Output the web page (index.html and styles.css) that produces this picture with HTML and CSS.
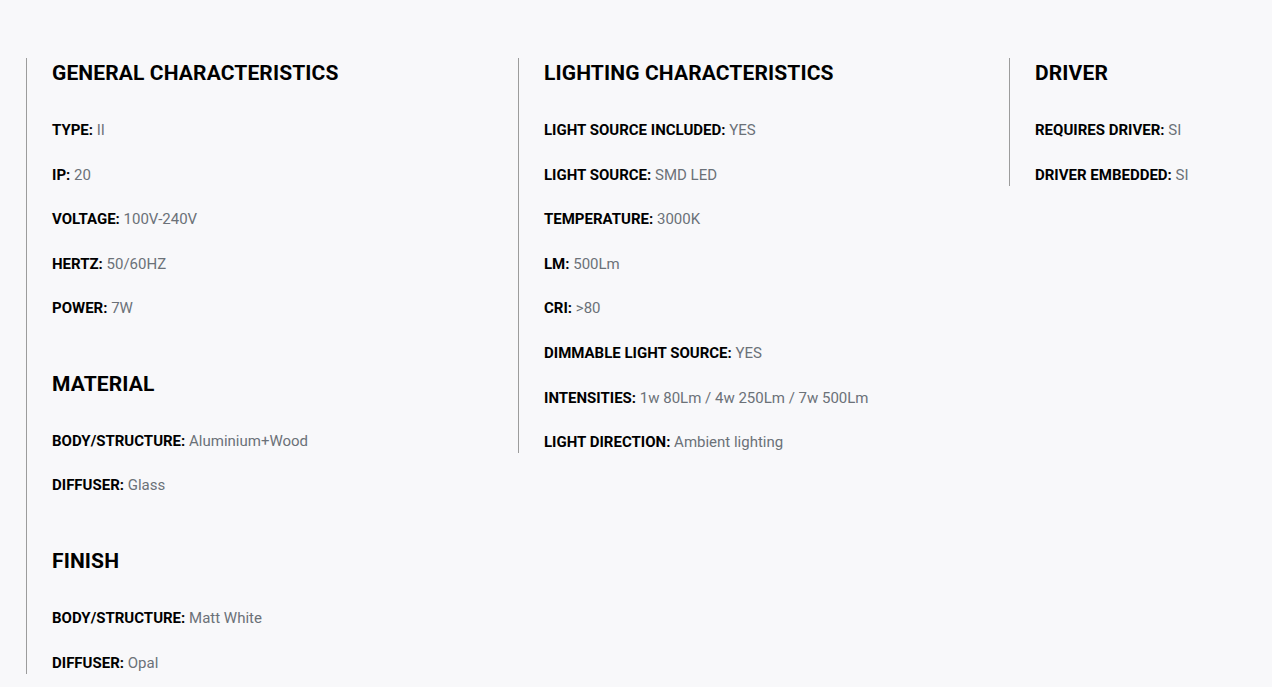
FILE: index.html
```html
<!DOCTYPE html>
<html lang="en">
<head>
<meta charset="utf-8">
<title>Specifications</title>
<link rel="stylesheet" href="styles.css">
</head>
<body>
<div class="specs">
  <div class="col">
    <section class="group">
      <h3 class="title">GENERAL CHARACTERISTICS</h3>
      <ul class="list">
        <li class="row"><b>TYPE:</b> <span>II</span></li>
        <li class="row"><b>IP:</b> <span>20</span></li>
        <li class="row"><b>VOLTAGE:</b> <span>100V-240V</span></li>
        <li class="row"><b>HERTZ:</b> <span>50/60HZ</span></li>
        <li class="row"><b>POWER:</b> <span>7W</span></li>
      </ul>
    </section>
    <section class="group">
      <h3 class="title">MATERIAL</h3>
      <ul class="list">
        <li class="row"><b>BODY/STRUCTURE:</b> <span>Aluminium+Wood</span></li>
        <li class="row"><b>DIFFUSER:</b> <span>Glass</span></li>
      </ul>
    </section>
    <section class="group">
      <h3 class="title">FINISH</h3>
      <ul class="list">
        <li class="row"><b>BODY/STRUCTURE:</b> <span>Matt White</span></li>
        <li class="row"><b>DIFFUSER:</b> <span>Opal</span></li>
      </ul>
    </section>
  </div>
  <div class="col">
    <section class="group">
      <h3 class="title">LIGHTING CHARACTERISTICS</h3>
      <ul class="list">
        <li class="row"><b>LIGHT SOURCE INCLUDED:</b> <span>YES</span></li>
        <li class="row"><b>LIGHT SOURCE:</b> <span>SMD LED</span></li>
        <li class="row"><b>TEMPERATURE:</b> <span>3000K</span></li>
        <li class="row"><b>LM:</b> <span>500Lm</span></li>
        <li class="row"><b>CRI:</b> <span>&gt;80</span></li>
        <li class="row"><b>DIMMABLE LIGHT SOURCE:</b> <span>YES</span></li>
        <li class="row"><b>INTENSITIES:</b> <span>1w 80Lm / 4w 250Lm / 7w 500Lm</span></li>
        <li class="row"><b>LIGHT DIRECTION:</b> <span>Ambient lighting</span></li>
      </ul>
    </section>
  </div>
  <div class="col">
    <section class="group">
      <h3 class="title">DRIVER</h3>
      <ul class="list">
        <li class="row"><b>REQUIRES DRIVER:</b> <span>SI</span></li>
        <li class="row"><b>DRIVER EMBEDDED:</b> <span>SI</span></li>
      </ul>
    </section>
  </div>
</div>
</body>
</html>
```
FILE: styles.css
```css
html, body {
  margin: 0;
  padding: 0;
  background: #f8f8fa;
}
body {
  font-family: Roboto, "Liberation Sans", Arial, sans-serif;
  color: #000;
  height: 687px;
  overflow: hidden;
}
.specs {
  display: grid;
  grid-template-columns: 492px 491px 1fr;
  align-items: start;
  padding: 58px 0 0 26px;
}
.col {
  border-left: 1px solid #9c9c9c;
  padding: 3px 0 2px 25px;
  display: flex;
  flex-direction: column;
  gap: 54.5px;
}
.title {
  margin: 0 0 36px;
  font-size: 21px;
  line-height: 24px;
  font-weight: 700;
  letter-spacing: 0.12px;
  color: #000;
}
.list {
  list-style: none;
  margin: 0;
  padding: 0;
  display: flex;
  flex-direction: column;
  gap: 26.6px;
}
.row {
  font-size: 15px;
  line-height: 18px;
  white-space: nowrap;
}
.row b {
  font-weight: 700;
  color: #000;
}
.row span {
  color: #6b7178;
}
```
